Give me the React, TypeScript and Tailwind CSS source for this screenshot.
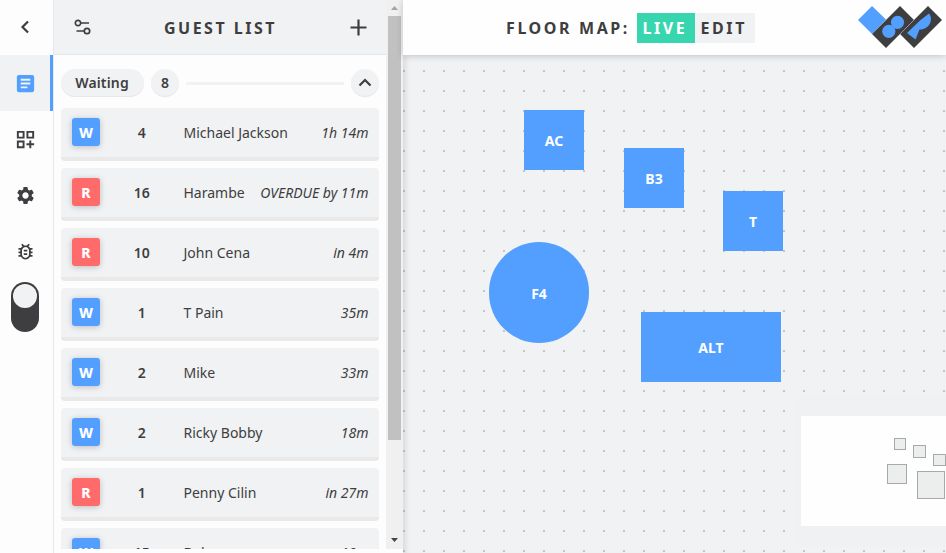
import type { ReactNode } from "react";
import { MdArticle, MdOutlineBugReport, MdOutlineDashboardCustomize, MdSettings } from "react-icons/md";

type Guest = { kind: "W" | "R"; size: number; name: string; time: string };

const guests: Guest[] = [
  { kind: "W", size: 4, name: "Michael Jackson", time: "1h 14m" },
  { kind: "R", size: 16, name: "Harambe", time: "OVERDUE by 11m" },
  { kind: "R", size: 10, name: "John Cena", time: "in 4m" },
  { kind: "W", size: 1, name: "T Pain", time: "35m" },
  { kind: "W", size: 2, name: "Mike", time: "33m" },
  { kind: "W", size: 2, name: "Ricky Bobby", time: "18m" },
  { kind: "R", size: 1, name: "Penny Cilin", time: "in 27m" },
  { kind: "W", size: 15, name: "Bob", time: "10m" },
];

const tables = [
  { label: "AC", place: "left-[121px] top-[55px] h-[60px] w-[60px]" },
  { label: "B3", place: "left-[221px] top-[93px] h-[60px] w-[60px]" },
  { label: "T", place: "left-[320px] top-[136px] h-[60px] w-[60px]" },
  { label: "F4", place: "left-[86px] top-[187px] h-[101px] w-[100px] rounded-full" },
  { label: "ALT", place: "left-[238px] top-[257px] h-[70px] w-[140px]" },
];

function NavItem({ children, active = false }: { children: ReactNode; active?: boolean }) {
  return (
    <div
      className={
        active
          ? "flex h-14 items-center border-r-[3px] border-[#539fff] bg-[#f1f2f4] pl-[14px] text-[#539fff]"
          : "flex h-14 items-center pl-[14px]"
      }
    >
      {children}
    </div>
  );
}

function Sidebar() {
  return (
    <nav className="flex w-[54px] shrink-0 flex-col border-r border-[#e8e8e9] bg-[#fdfdfe]">
      <div className="flex h-[55px] items-center justify-center pb-[2px] pr-1">
        <svg width="10" height="14" viewBox="0 0 10 14" fill="none" stroke="currentColor" strokeWidth="2.2">
          <path d="M8 1.5 2.5 7 8 12.5" />
        </svg>
      </div>
      <NavItem active>
        <MdArticle className="h-[23px] w-[23px]" />
      </NavItem>
      <NavItem>
        <MdOutlineDashboardCustomize className="h-[23px] w-[23px]" />
      </NavItem>
      <NavItem>
        <MdSettings className="ml-[1px] h-[21px] w-[21px]" />
      </NavItem>
      <NavItem>
        <MdOutlineBugReport className="ml-[1px] h-[21px] w-[21px]" />
      </NavItem>
      <div className="ml-[11px] mt-[3px] flex h-[50px] w-7 justify-center rounded-full bg-[#3e3e40] pt-[2px]">
        <div className="h-6 w-6 rounded-full bg-[#f1f2f4]" />
      </div>
    </nav>
  );
}

function GuestRow({ guest }: { guest: Guest }) {
  return (
    <div className="flex h-[53px] shrink-0 items-center rounded border-b-4 border-[#e9e9ea] bg-[#f1f2f4] pl-[11px] pr-[10.5px] text-sm">
      <div
        className={
          guest.kind === "W"
            ? "mb-px flex h-7 w-7 items-center justify-center rounded-[3px] bg-[#539fff] pt-px font-extrabold text-white shadow-[0_1px_6px_rgba(0,0,0,0.22)]"
            : "mb-px flex h-7 w-7 items-center justify-center rounded-[3px] bg-[#ff6b6b] pt-px font-extrabold text-white shadow-[0_1px_6px_rgba(0,0,0,0.22)]"
        }
      >
        {guest.kind}
      </div>
      <div className="w-[83.5px] text-center font-semibold">{guest.size}</div>
      <div className="flex-1 whitespace-nowrap">{guest.name}</div>
      <div className="whitespace-nowrap italic">{guest.time}</div>
    </div>
  );
}

function GuestPanel() {
  return (
    <section className="flex w-[332px] shrink-0 flex-col bg-[#fdfdfe]">
      <header className="flex h-[55px] items-center justify-between border-b border-[#e6e7e8] bg-[#f1f2f4] pl-5 pr-[19px]">
        <svg width="17" height="16" viewBox="0 0 17 16" fill="none" stroke="currentColor" strokeWidth="1.7">
          <circle cx="4" cy="4" r="2.7" />
          <path d="M6.7 4H15M2.5 12H10.3" />
          <circle cx="13" cy="12" r="2.7" />
        </svg>
        <h1 className="pt-[2px] text-base font-bold tracking-[2.5px]">GUEST LIST</h1>
        <svg width="17" height="17" viewBox="0 0 17 17" fill="none" stroke="currentColor" strokeWidth="2.2">
          <path d="M8.5 0.5V16.5M0.5 8.5H16.5" />
        </svg>
      </header>
      <div className="flex h-[494px] flex-col gap-[7px] overflow-hidden px-[7px] pt-[14px]">
        <div className="mb-[4px] flex h-7 shrink-0 items-center text-sm font-semibold">
          <div className="flex h-7 w-[83px] items-center justify-center rounded-full bg-[#f1f2f4] pr-px tracking-[0.15px] shadow-[inset_0_-1px_0_#e8e8ea]">Waiting</div>
          <div className="ml-[7px] flex h-7 w-7 items-center justify-center rounded-full bg-[#f1f2f4] shadow-[inset_0_-1px_0_#e8e8ea]">8</div>
          <div className="mx-[7px] h-[3px] flex-1 bg-[#f1f2f4]" />
          <div className="flex h-7 w-7 items-center justify-center rounded-full bg-[#f1f2f4] pb-[2px] shadow-[inset_0_-1px_0_#e8e8ea]">
            <svg width="14" height="9" viewBox="0 0 14 9" fill="none" stroke="currentColor" strokeWidth="2.2">
              <path d="M1.5 7.5 7 2 12.5 7.5" />
            </svg>
          </div>
        </div>
        {guests.map((guest) => (
          <GuestRow key={guest.name} guest={guest} />
        ))}
      </div>
    </section>
  );
}

function Scrollbar() {
  return (
    <div className="w-[17px] shrink-0 bg-[#fdfdfe]">
      <div className="flex h-[549px] flex-col items-center bg-[#f0f0f1]">
        <svg className="h-4 w-[17px] shrink-0" viewBox="0 0 17 16">
          <path d="M5 10 8.5 6 12 10Z" fill="#a3a3a3" />
        </svg>
        <div className="h-[424px] w-[13px] bg-[#c1c1c1]" />
        <svg className="mt-auto h-[17px] w-[17px]" viewBox="0 0 17 17">
          <path d="M5 6 8.5 10 12 6Z" fill="#4d4145" />
        </svg>
      </div>
    </div>
  );
}

function Logo() {
  return (
    <svg className="mb-[2px] shrink-0" width="86" height="44" viewBox="0 0 86 44">
      <path d="M14 1 28 14.5 14 29 0 15Z" fill="#539fff" />
      <path d="M42 1 56 15 28 43 14 29Z" fill="#3e3e40" />
      <path d="M70 1 84 15 56 43 42 29Z" fill="#3e3e40" />
      <path d="m42 29 14-14" stroke="#a5a5a7" strokeWidth=".7" />
      <circle cx="39.5" cy="17.3" r="6.6" fill="#539fff" />
      <circle cx="30.8" cy="26.3" r="6.6" fill="#539fff" />
      <path d="M71 8.5C76 14.5 71 25 61.5 24.5L57.5 34.5 49 28 62 15.5Z" fill="#539fff" />
    </svg>
  );
}

function FloorMap() {
  return (
    <main className="flex min-w-0 flex-1 flex-col">
      <header className="z-10 flex h-[55px] shrink-0 items-center bg-[#fefefe] pl-[103px] pr-[2px] text-base font-bold tracking-[2.6px] shadow-[0_1px_7px_rgba(0,0,0,0.2)]">
        <span className="w-[131px] whitespace-nowrap">FLOOR MAP:</span>
        <span className="flex h-[30px] w-[58px] items-center bg-[#38d6ae] pl-[5.5px] text-white">LIVE</span>
        <span className="flex h-[30px] w-[60px] items-center bg-[#f1f2f4] pl-[5.5px]">EDIT</span>
        <div className="ml-auto">
          <Logo />
        </div>
      </header>
      <div className="relative flex-1 overflow-hidden bg-[#f1f2f4] bg-[linear-gradient(90deg,transparent_2px,#f1f2f4_2px),linear-gradient(transparent_2px,#f1f2f4_2px),linear-gradient(#c5c5c8,#c5c5c8)] bg-[length:20px_20px] bg-[position:0_15px] shadow-[inset_7px_0_6px_-5px_rgba(0,0,0,0.12)]">
        {tables.map((table) => (
          <div
            key={table.label}
            className={`absolute flex items-center justify-center bg-[#539fff] pt-[2px] text-sm font-bold text-white ${table.place}`}
          >
            {table.label}
          </div>
        ))}
        <div className="absolute left-[392px] top-[341px] h-[150px] w-[151px] bg-[#f0f1f3] pl-[6px] pt-5">
          <svg className="bg-[#fefefe]" width="145" height="110" viewBox="0 0 145 110" fill="#eceeee" stroke="#a7aaaa">
            <rect x="93.5" y="22.5" width="11" height="11" />
            <rect x="112.5" y="29.5" width="12" height="12" />
            <rect x="132.5" y="38.5" width="12" height="11" />
            <rect x="86.5" y="48.5" width="19" height="19" />
            <rect x="116.5" y="55.5" width="27" height="27" />
          </svg>
        </div>
      </div>
    </main>
  );
}

export default function App() {
  return (
    <div className="flex h-[553px] w-[946px] overflow-hidden font-['Noto_Sans','Open_Sans',sans-serif] text-[#3e3e40]">
      <Sidebar />
      <GuestPanel />
      <Scrollbar />
      <FloorMap />
    </div>
  );
}
